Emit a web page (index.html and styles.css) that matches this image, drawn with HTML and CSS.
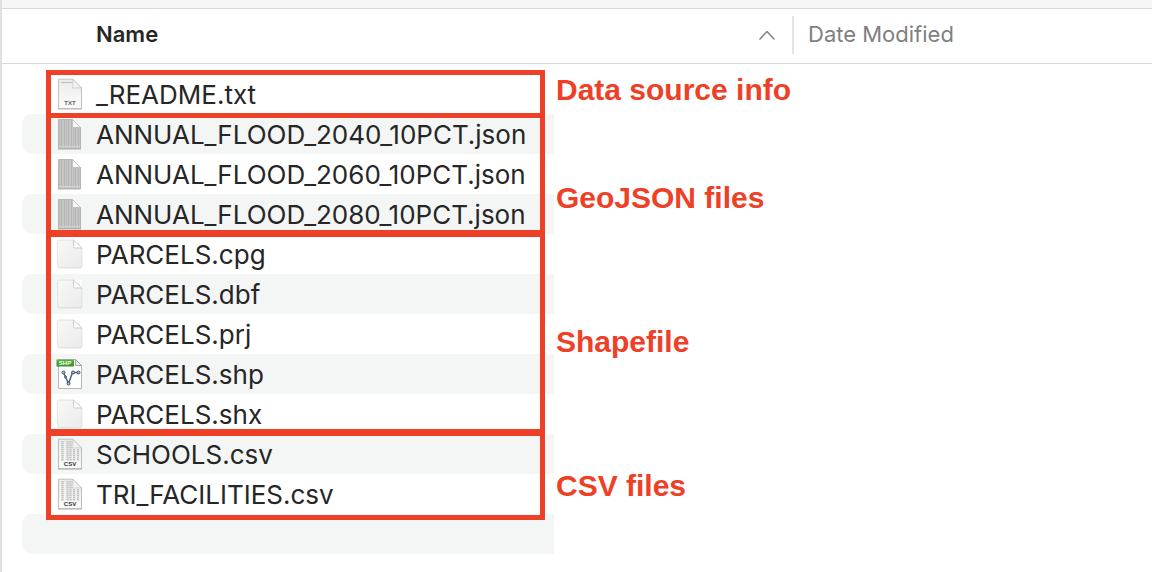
FILE: index.html
```html
<!DOCTYPE html>
<html lang="en">
<head>
<meta charset="utf-8">
<title>Files</title>
<link rel="stylesheet" href="styles.css">
</head>
<body>
<svg class="defs" aria-hidden="true">
  <defs>
    <linearGradient id="paper" x1="0" y1="0" x2="0" y2="1"><stop offset="0" stop-color="#ececec"/><stop offset="1" stop-color="#fbfbfb"/></linearGradient>
    <linearGradient id="blankpaper" x1="0" y1="0" x2="1" y2="1"><stop offset="0" stop-color="#f8f8f8"/><stop offset="1" stop-color="#ebebeb"/></linearGradient>
    <linearGradient id="fold" x1="0" y1="1" x2="1" y2="0"><stop offset="0" stop-color="#ffffff"/><stop offset="1" stop-color="#d8d8d8"/></linearGradient>
    <linearGradient id="green" x1="0" y1="0" x2="0" y2="1"><stop offset="0" stop-color="#5ab540"/><stop offset="1" stop-color="#2f9422"/></linearGradient>
    <pattern id="code" width="7" height="40" patternUnits="userSpaceOnUse"><path d="M0 0h7v40H0z" fill="#c6c6c6"/><path d="M1.500 0v40M5.500 0v40" stroke="#b4b4b4"/><path d="M3.500 0v40" stroke="#bcbcbc"/></pattern>
    <symbol id="blank" viewBox="0 0 28 32">
      <path d="M2 3h24v26q0 1.500-1.500 1.500h-21Q2 30.500 2 29z" fill="#000" opacity=".1"/>
      <path d="M3 2h14.500l8.500 8V28q0 1.500-1.500 1.500h-21Q1.500 29.500 1.500 28V3.500Q1.500 2 3 2z" fill="url(#blankpaper)" stroke="#dedede" stroke-width=".8"/>
      <path d="M17.500 2H26v8z" fill="#fff"/>
      <path d="M17.500 2v6.500q0 1.500 1.500 1.500h7z" fill="#fcfcfc" stroke="#c8c8c8" stroke-width=".9"/>
    </symbol>
    <symbol id="txt" viewBox="0 0 28 32">
      <path d="M2 2.500h15.500l8.500 8.500V31.500H2z" fill="#000" opacity=".3"/>
      <path d="M2.500 1.200h14.300l8.700 8.700V30.500h-23z" fill="url(#paper)" stroke="#bdbdbd" stroke-width=".9"/>
      <path d="M5 4.500h11" stroke="#c2c2c2" stroke-width="1.200"/>
      <path d="M16.800 1.200v8.700h8.700z" fill="url(#fold)" stroke="#c4c4c4" stroke-width=".8"/>
      <text x="14" y="27" text-anchor="middle" class="tag">TXT</text>
    </symbol>
    <symbol id="json" viewBox="0 0 28 32">
      <path d="M2 2.500h15l8 8v21H2z" fill="#000" opacity=".3"/>
      <path d="M2.500 1.500h14l8 8v20.800h-22z" fill="url(#code)" stroke="#b4b4b4" stroke-width=".9"/>
      <path d="M16.500 1.500v8h8z" fill="#f8f8f8" stroke="#b8b8b8" stroke-width=".7"/>
      <path d="M3 28.800h21" stroke="#dadada"/>
    </symbol>
    <symbol id="csv" viewBox="0 0 28 32">
      <path d="M2 2.500h15.500l8.500 8.500V31.500H2z" fill="#000" opacity=".32"/>
      <path d="M2.500 1.200h14.300l8.700 8.700V30.500h-23z" fill="url(#paper)" stroke="#b8b8b8" stroke-width=".9"/>
      <path d="M6.500 3v20M11.500 3v20M14.500 3v20M18 11v12M22 11v12" stroke="#c2c2c2" stroke-width="2.200" stroke-dasharray="1.500 .5"/>
      <path d="M16.800 1.200v8.700h8.700z" fill="url(#fold)" stroke="#c4c4c4" stroke-width=".8"/>
      <text x="14" y="27.500" text-anchor="middle" class="tag tag-dark">CSV</text>
    </symbol>
    <symbol id="shp" viewBox="0 0 28 32">
      <path d="M2.500 1.500h17l6 6V30.500h-23z" fill="#fff" stroke="#b8b8b8"/>
      <path d="M19.500 1.500v6h6z" fill="#eee" stroke="#8f8f8f" stroke-width=".8"/>
      <path d="M.500 1.500h17.500v7H.500z" fill="url(#green)"/>
      <text x="9" y="7.200" text-anchor="middle" class="tag tag-light">SHP</text>
      <path d="M7.500 14.500l5 11 4-11h6" fill="none" stroke="#52647d" stroke-width="1.500"/>
      <g fill="#a9b8ca" stroke="#34455f" stroke-width=".9"><circle cx="7.500" cy="14.500" r="1.500"/><circle cx="9.500" cy="19" r="1"/><circle cx="12.500" cy="25.500" r="1.500"/><circle cx="17" cy="14.500" r="1.500"/><circle cx="22.500" cy="14.500" r="1.500"/></g>
    </symbol>
  </defs>
</svg>
<div class="window">
  <div class="toolbar-edge"></div>
  <header class="columns">
    <button class="column column-name" type="button">Name
      <svg class="sort" viewBox="0 0 16 10" aria-hidden="true"><path d="M1 9l7-7.500L15 9"/></svg>
    </button>
    <button class="column column-date" type="button">Date Modified</button>
  </header>
  <main class="files">
    <section class="group readme">
      <ul class="rows">
        <li class="row"><svg class="icon" aria-hidden="true"><use href="#txt"/></svg>_README.txt</li>
      </ul>
      <h2 class="label">Data source info</h2>
    </section>
    <section class="group geojson">
      <ul class="rows">
        <li class="row striped"><svg class="icon" aria-hidden="true"><use href="#json"/></svg>ANNUAL_FLOOD_2040_10PCT.json</li>
        <li class="row"><svg class="icon" aria-hidden="true"><use href="#json"/></svg>ANNUAL_FLOOD_2060_10PCT.json</li>
        <li class="row striped"><svg class="icon" aria-hidden="true"><use href="#json"/></svg>ANNUAL_FLOOD_2080_10PCT.json</li>
      </ul>
      <h2 class="label">GeoJSON files</h2>
    </section>
    <section class="group shapefile">
      <ul class="rows">
        <li class="row"><svg class="icon" aria-hidden="true"><use href="#blank"/></svg>PARCELS.cpg</li>
        <li class="row striped"><svg class="icon" aria-hidden="true"><use href="#blank"/></svg>PARCELS.dbf</li>
        <li class="row"><svg class="icon" aria-hidden="true"><use href="#blank"/></svg>PARCELS.prj</li>
        <li class="row striped"><svg class="icon" aria-hidden="true"><use href="#shp"/></svg>PARCELS.shp</li>
        <li class="row"><svg class="icon" aria-hidden="true"><use href="#blank"/></svg>PARCELS.shx</li>
      </ul>
      <h2 class="label">Shapefile</h2>
    </section>
    <section class="group csv">
      <ul class="rows">
        <li class="row striped"><svg class="icon" aria-hidden="true"><use href="#csv"/></svg>SCHOOLS.csv</li>
        <li class="row"><svg class="icon" aria-hidden="true"><use href="#csv"/></svg>TRI_FACILITIES.csv</li>
      </ul>
      <h2 class="label">CSV files</h2>
    </section>
    <div class="row striped empty"></div>
  </main>
</div>
</body>
</html>
```

FILE: styles.css
```css
*,
*::after { box-sizing: border-box; }

body {
  margin: 0;
  background: #fff;
  color: #262626;
  font-family: Inter, "Liberation Sans", sans-serif;
}

.defs { position: absolute; width: 0; height: 0; }

.window {
  min-height: 100vh;
  border-left: 2px solid #e0e0e0;
}

.toolbar-edge {
  height: 9px;
  background: #f6f6f6;
  border-bottom: 1px solid #d8d8d8;
}

.columns {
  display: flex;
  align-items: center;
  height: 55px;
  padding-bottom: 2px;
  border-bottom: 1px solid #d8d8d8;
}

.column {
  display: flex;
  align-items: center;
  height: 38px;
  padding: 0 0 2px;
  border: 0;
  background: none;
  color: #808080;
  font: 400 22px/28px Inter, "Liberation Sans", sans-serif;
}

.column-name {
  justify-content: space-between;
  width: 790px;
  padding-right: 17px;
  padding-left: 94px;
  color: #262626;
  font-weight: 600;
}

.column-date {
  flex: 1;
  padding-left: 14px;
  border-left: 2px solid #e4e4e4;
}

.sort {
  width: 16px;
  height: 10px;
  margin-top: 2px;
  fill: none;
  stroke: #858585;
  stroke-width: 1.6;
  stroke-linecap: round;
  stroke-linejoin: round;
}

.files { padding: 10px 0 18px 20px; }

.group {
  position: relative;
  display: flex;
  align-items: flex-start;
}

.group::after {
  content: "";
  position: absolute;
  left: 24px;
  width: 499px;
  border: 5px solid #ee4026;
}

.readme::after { top: -4px; bottom: -4px; }
.geojson::after { top: -1px; bottom: -1px; }
.shapefile::after { top: -2px; bottom: 0; }
.csv::after { top: -3px; bottom: -6px; }

.rows {
  margin: 0;
  padding: 0;
  list-style: none;
}

.row {
  display: flex;
  align-items: center;
  gap: 12px;
  width: 532px;
  height: 40px;
  padding: 2px 0 0 34px;
  border-radius: 10px 0 0 10px;
  font-size: 26px;
  line-height: 38px;
  white-space: nowrap;
}

.striped { background: #f4f5f5; }

.icon {
  flex: none;
  width: 28px;
  height: 32px;
  margin-bottom: 2px;
}

.tag {
  font: 700 6px "Liberation Sans", sans-serif;
  fill: #666;
}
.tag-dark { fill: #333; }
.tag-light { fill: #fff; }

.label {
  margin: 0 0 0 2px;
  color: #ee4026;
  font: 700 30px/32px "Liberation Sans", sans-serif;
}

.geojson .label { padding-top: 68px; }
.shapefile .label { padding-top: 92px; }
.csv .label { padding-top: 36px; }
```
